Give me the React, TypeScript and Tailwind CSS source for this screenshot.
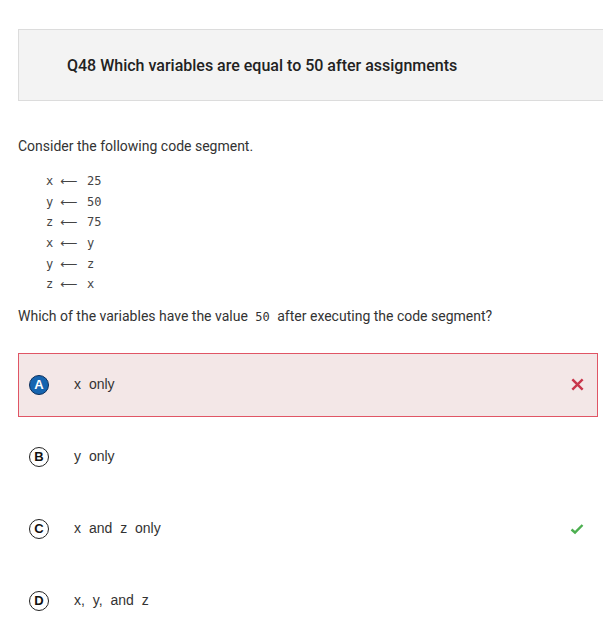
import React from 'react';

const codeLines: [string, string][] = [
  ['x', '25'],
  ['y', '50'],
  ['z', '75'],
  ['x', 'y'],
  ['y', 'z'],
  ['z', 'x'],
];

type Choice = {
  letter: string;
  parts: (string | { code: string })[];
  status?: 'wrong' | 'right';
  selected?: boolean;
};

const choices: Choice[] = [
  { letter: 'A', parts: [{ code: 'x' }, ' only'], status: 'wrong', selected: true },
  { letter: 'B', parts: [{ code: 'y' }, ' only'] },
  { letter: 'C', parts: [{ code: 'x' }, ' and ', { code: 'z' }, ' only'], status: 'right' },
  { letter: 'D', parts: [{ code: 'x' }, ', ', { code: 'y' }, ', and ', { code: 'z' }] },
];

const mono = "font-['DejaVu_Sans_Mono',monospace]";

const Badge = ({ letter, selected }: { letter: string; selected?: boolean }) => (
  <span
    className={`flex h-[20px] w-[20px] items-center justify-center rounded-full border-[1.5px] font-['Liberation_Sans',sans-serif] text-[13px] font-bold leading-none ${
      selected ? 'border-[#0b2f5c] bg-[#1565b0] text-white' : 'border-[#222] bg-white text-[#111]'
    }`}
  >
    {letter}
  </span>
);

export default function App() {
  return (
    <div className="min-h-[639px] w-[603px] overflow-hidden bg-white font-['Roboto',sans-serif] text-[#333]">
      <div className="pt-[29px] pl-[18px]">
        <div className="flex h-[72px] items-center border border-r-0 border-[#dcdcdc] bg-[#f3f3f3] pl-[48px]">
          <h1 className="pt-[2px] text-[16px] font-medium text-[#222]">Q48 Which variables are equal to 50 after assignments</h1>
        </div>
      </div>

      <div className="pl-[18px]">
        <p className="mt-[35px] text-[14px]">Consider the following code segment.</p>

        <div className={`mt-[14px] pl-[28px] text-[12px] text-[#444] ${mono}`}>
          {codeLines.map(([l, r], i) => (
            <div key={i} className="flex h-[20.6px] items-center">
              <span className="w-[14px]">{l}</span>
              <span className="w-[27px] font-['DejaVu_Sans',sans-serif] text-[12px]">⟵</span>
              <span>{r}</span>
            </div>
          ))}
        </div>

        <p className="mt-[11px] text-[14px]">
          Which of the variables have the value <span className={`px-1 text-[12px] ${mono}`}>50</span> after executing the code segment?
        </p>

        <div className="mt-[26px] flex w-[580px] flex-col">
          {choices.map((c) => (
            <div
              key={c.letter}
              className={`mb-[8px] flex h-[64px] items-center border pl-[10px] pr-[12px] ${
                c.selected ? 'border-[#e05565] bg-[#f3e7e7]' : 'border-transparent'
              }`}
            >
              <Badge letter={c.letter} selected={c.selected} />
              <span className="ml-[25px] flex-1 font-['Liberation_Sans',sans-serif] text-[14px] text-[#333] [word-spacing:4px]">
                {c.parts.map((p, i) =>
                  typeof p === 'string' ? (
                    <span key={i} className="whitespace-pre">{p}</span>
                  ) : (
                    <span key={i}>{p.code}</span>
                  )
                )}
              </span>
              {c.status === 'wrong' && (
                <svg width="13" height="13" viewBox="0 0 12 12" className="mr-[1px]">
                  <path d="M2 2 L10 10 M10 2 L2 10" stroke="#c8354a" strokeWidth="2.2" strokeLinecap="square" />
                </svg>
              )}
              {c.status === 'right' && (
                <svg width="14" height="12" viewBox="0 0 14 12" className="mr-[1px]">
                  <path d="M1.5 6.5 L5 9.5 L12.5 2" stroke="#4caf50" strokeWidth="2.4" fill="none" />
                </svg>
              )}
            </div>
          ))}
        </div>
      </div>
    </div>
  );
}
